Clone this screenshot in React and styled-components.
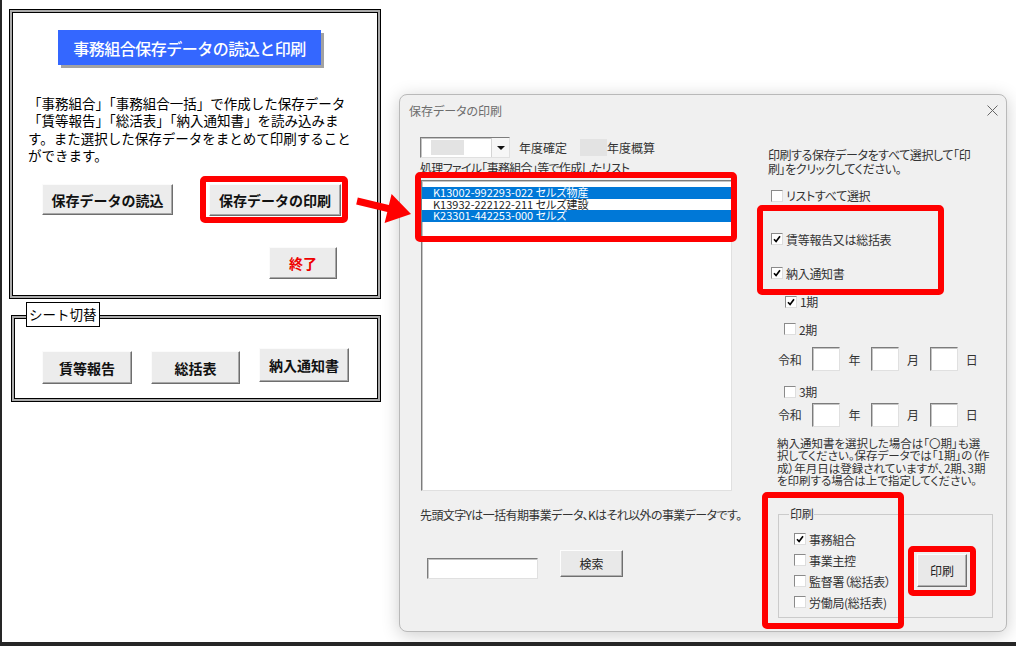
import React from "react";
import styled, { createGlobalStyle, css } from "styled-components";

const GlobalStyle = createGlobalStyle`
  html, body {
    margin: 0;
    padding: 0;
    background: #fff;
  }
  body {
    font-family: "Noto Sans CJK JP", "Noto Sans", sans-serif;
    overflow: hidden;
  }
`;

// ---- page ----

const Screen = styled.div`
  position: relative;
  box-sizing: border-box;
  width: 1016px;
  height: 646px;
  display: flex;
  align-items: flex-start;
  padding: 9px 0 0 7px;
  border-left: 2px solid #262626;
  border-bottom: 4px solid #262626;
  background: #fff;
  overflow: hidden;
`;

const LeftColumn = styled.div`
  display: flex;
  flex-direction: column;
  flex-shrink: 0;
  width: 372px;
`;

const frame = css`
  box-sizing: border-box;
  border: 1px solid #000;
  box-shadow: inset 0 0 0 2px #ababab, inset 0 0 0 3px #000;
  background: #fff;
`;

const MainPanel = styled.div`
  ${frame};
  width: 372px;
  height: 290px;
  display: flex;
  flex-direction: column;
  align-items: flex-start;
`;

const TitleBadge = styled.div`
  margin: 20px 0 0 48px;
  width: 263px;
  height: 35px;
  background: #3467ff;
  color: #fff;
  font-size: 16px;
  font-weight: 500;
  letter-spacing: -0.5px;
  display: flex;
  align-items: center;
  justify-content: center;
  box-shadow: 3px 3px 0 #a2a2a2;
`;

const Desc = styled.p`
  margin: 30px 0 0 18px;
  font-size: 13.5px;
  line-height: 17.3px;
  color: #000;
`;

const ButtonRow = styled.div`
  display: flex;
  align-items: center;
  gap: 27px;
  margin: 12px 0 0 32px;
`;

const SheetButton = styled.button`
  box-sizing: border-box;
  width: ${(p) => p.$w}px;
  height: ${(p) => p.$h}px;
  margin-top: ${(p) => (p.$raise ? -3 : 0)}px;
  padding: 0;
  font-family: inherit;
  font-size: 14px;
  font-weight: 700;
  color: ${(p) => p.$color || "#111"};
  background: #ececec;
  border: 1px solid;
  border-color: #fbfbfb #6e6e6e #6e6e6e #fbfbfb;
  box-shadow: inset -1px -1px 0 #a8a8a8;
`;

const Highlight = styled.div`
  display: flex;
  border: 6px solid #ff0000;
  border-radius: 5px;
  padding: ${(p) => p.$pad};
`;

const QuitRow = styled.div`
  margin: 24px 0 0 259px;
`;

const SheetPanel = styled.div`
  ${frame};
  position: relative;
  width: 370px;
  height: 87px;
  margin: 16px 0 0 2px;
`;

const SheetLabel = styled.div`
  position: absolute;
  top: -14px;
  left: 14px;
  box-sizing: border-box;
  height: 25px;
  padding: 0 2px;
  border: 1px solid #000;
  background: #fff;
  font-size: 13.5px;
  line-height: 23px;
  color: #000;
`;

const SheetButtons = styled.div`
  display: flex;
  align-items: flex-start;
  gap: 19px;
  margin: 35px 0 0 30px;
`;

// ---- dialog ----

const Dialog = styled.div`
  position: relative;
  box-sizing: border-box;
  flex-shrink: 0;
  width: 608px;
  height: 538px;
  margin: 85px 0 0 18px;
  display: flex;
  flex-direction: column;
  background: #f0f0f0;
  border: 1px solid #b9b9b9;
  border-radius: 8px;
  box-shadow: 0 3px 18px rgba(0, 0, 0, 0.2);
  font-size: 12px;
  font-feature-settings: "palt";
  color: #333;
  letter-spacing: -0.3px;
`;

const TitleBar = styled.div`
  height: 30px;
  display: flex;
  align-items: center;
  justify-content: space-between;
  padding: 0 8px 0 9px;
  color: #6d6d6d;
  letter-spacing: 0;
`;

const Body = styled.div`
  display: flex;
  flex: 1;
`;

const LeftPane = styled.div`
  box-sizing: border-box;
  flex-shrink: 0;
  width: 368px;
  padding-left: 20px;
  display: flex;
  flex-direction: column;
  align-items: flex-start;
`;

const YearRow = styled.div`
  display: flex;
  align-items: center;
  height: 21px;
  margin-top: 12px;
`;

const sunken = css`
  box-sizing: border-box;
  background: #fff;
  border: 1px solid;
  border-color: #7c7c7c #e0e0e0 #e0e0e0 #7c7c7c;
  box-shadow: inset 1px 1px 0 #c4c4c4;
`;

const Combo = styled.div`
  ${sunken};
  width: 90px;
  height: 21px;
  display: flex;
`;

const Redact = styled.span`
  width: ${(p) => p.$w}px;
  height: ${(p) => p.$h}px;
  margin-left: ${(p) => p.$ml}px;
  align-self: center;
  background: #e3e3e3;
`;

const ComboArrow = styled.span`
  margin-left: auto;
  width: 17px;
  display: flex;
  align-items: center;
  justify-content: center;
  border-left: 1px solid #d4d4d4;
  background: #f6f6f6;
  &::after {
    content: "";
    border-left: 4px solid transparent;
    border-right: 4px solid transparent;
    border-top: 4px solid #111;
  }
`;

const YearText = styled.span`
  margin-left: ${(p) => p.$ml || 0}px;
  letter-spacing: 0;
`;

const ListLabel = styled.div`
  margin-top: 3px;
  line-height: 14px;
  letter-spacing: -0.7px;
  white-space: nowrap;
`;

const ListBox = styled.div`
  ${sunken};
  width: 311px;
  height: 311px;
  margin: 5px 0 0 1px;
  padding-top: 6px;
`;

const ListItem = styled.div`
  height: 11.5px;
  line-height: 11.5px;
  font-size: 11px;
  letter-spacing: 0;
  padding-left: 11px;
  white-space: nowrap;
  background: ${(p) => (p.$selected ? "#0078d7" : "#fff")};
  color: ${(p) => (p.$selected ? "#fff" : "#222")};
`;

const BottomNote = styled.div`
  margin-top: 17px;
  line-height: 14px;
  letter-spacing: -0.6px;
  white-space: nowrap;
`;

const SearchRow = styled.div`
  display: flex;
  align-items: flex-start;
  margin-top: 28px;
`;

const SearchInput = styled.div`
  ${sunken};
  width: 111px;
  height: 21px;
  margin: 8px 0 0 7px;
`;

const DialogButton = styled.button`
  box-sizing: border-box;
  width: ${(p) => p.$w}px;
  height: ${(p) => p.$h}px;
  margin-left: ${(p) => p.$ml || 0}px;
  padding: 0;
  font-family: inherit;
  font-size: 12px;
  letter-spacing: 0;
  color: #222;
  background: #e9e9e9;
  border: 1px solid;
  border-color: #fdfdfd #6f6f6f #6f6f6f #fdfdfd;
  box-shadow: inset -1px -1px 0 #b0b0b0;
`;

const RightPane = styled.div`
  flex: 1;
  min-width: 0;
  display: flex;
  flex-direction: column;
  align-items: flex-start;
`;

const Instruction = styled.div`
  margin-top: 23px;
  line-height: 14px;
  letter-spacing: -0.4px;
  white-space: nowrap;
`;

const CheckRow = styled.label`
  display: flex;
  align-items: center;
  gap: 3px;
  height: 14px;
  margin-top: ${(p) => p.$top || 0}px;
  margin-left: ${(p) => p.$indent || 0}px;
  white-space: nowrap;
`;

const Box = styled.span`
  box-sizing: border-box;
  width: 12px;
  height: 12px;
  display: inline-flex;
  align-items: center;
  justify-content: center;
  background: #fff;
  border: 1px solid;
  border-color: #8a8a8a #dedede #dedede #8a8a8a;
`;

const DateRow = styled.div`
  display: flex;
  align-items: center;
  height: 24px;
  margin: ${(p) => p.$top}px 0 0 10px;
`;

const DateBox = styled.span`
  ${sunken};
  width: 28px;
  height: 24px;
  margin: 0 8px 0 11px;
`;

const PeriodNote = styled.div`
  margin: 10px 0 0 9px;
  font-size: 11.5px;
  line-height: 12.3px;
  letter-spacing: 0;
  white-space: nowrap;
`;

const Group = styled.fieldset`
  box-sizing: border-box;
  width: 215px;
  height: 111px;
  margin: 21px 0 0 10px;
  padding: 0;
  min-inline-size: 0;
  border: 1px solid #cbcbcb;
`;

const Legend = styled.legend`
  margin-left: 10px;
  padding: 0 1px;
  line-height: 14px;
`;

const GroupInner = styled.div`
  display: flex;
  align-items: center;
  margin-top: 11px;
  padding-left: 15px;
`;

const GroupChecks = styled.div`
  display: flex;
  flex-direction: column;
  gap: 7px;
  width: 114px;
`;

const RedBox = styled.div`
  position: absolute;
  box-sizing: border-box;
  left: ${(p) => p.$x}px;
  top: ${(p) => p.$y}px;
  width: ${(p) => p.$w}px;
  height: ${(p) => p.$h}px;
  border: 6px solid #ff0000;
  border-radius: 5px;
  pointer-events: none;
`;

const ArrowSvg = styled.svg`
  position: absolute;
  left: 348px;
  top: 185px;
  z-index: 5;
`;

const Check = ({ on, children, top, indent }) => (
  <CheckRow $top={top} $indent={indent}>
    <Box>
      {on && (
        <svg width="8" height="8" viewBox="0 0 8 8">
          <path d="M1 4.2 L3.1 6.5 L7 1.3" fill="none" stroke="#000" strokeWidth="1.7" />
        </svg>
      )}
    </Box>
    <span>{children}</span>
  </CheckRow>
);

const DateLine = ({ top }) => (
  <DateRow $top={top}>
    <span>令和</span>
    <DateBox />
    <span>年</span>
    <DateBox />
    <span>月</span>
    <DateBox />
    <span>日</span>
  </DateRow>
);

const App = () => {
  const files = [
    { code: "K13002-992293-022 セルズ物産", selected: true },
    { code: "K13932-222122-211 セルズ建設", selected: false },
    { code: "K23301-442253-000 セルズ", selected: true },
  ];

  return (
    <Screen>
      <GlobalStyle />
      <LeftColumn>
        <MainPanel>
          <TitleBadge>事務組合保存データの読込と印刷</TitleBadge>
          <Desc>
            「事務組合」「事務組合一括」で作成した保存データ
            <br />
            「賃等報告」「総活表」「納入通知書」を読み込みま
            <br />
            す。また選択した保存データをまとめて印刷すること
            <br />
            ができます。
          </Desc>
          <ButtonRow>
            <SheetButton $w={131} $h={31}>保存データの読込</SheetButton>
            <Highlight $pad="2px 1px 1px 3px">
              <SheetButton $w={132} $h={32}>保存データの印刷</SheetButton>
            </Highlight>
          </ButtonRow>
          <QuitRow>
            <SheetButton $w={68} $h={32} $color="#ee0000">終了</SheetButton>
          </QuitRow>
        </MainPanel>

        <SheetPanel>
          <SheetLabel>シート切替</SheetLabel>
          <SheetButtons>
            <SheetButton $w={90} $h={33}>賃等報告</SheetButton>
            <SheetButton $w={89} $h={33}>総括表</SheetButton>
            <SheetButton $w={90} $h={34} $raise>納入通知書</SheetButton>
          </SheetButtons>
        </SheetPanel>
      </LeftColumn>

      <Dialog>
        <TitleBar>
          <span>保存データの印刷</span>
          <svg width="11" height="11" viewBox="0 0 11 11">
            <path d="M0.5 0.5 L10.5 10.5 M10.5 0.5 L0.5 10.5" stroke="#666" strokeWidth="1" />
          </svg>
        </TitleBar>
        <Body>
          <LeftPane>
            <YearRow>
              <Combo>
                <Redact $w={33} $h={15} $ml={10} />
                <ComboArrow />
              </Combo>
              <YearText $ml={9}>年度確定</YearText>
              <Redact $w={27} $h={17} $ml={13} />
              <YearText>年度概算</YearText>
            </YearRow>
            <ListLabel>処理ファイル「事務組合」等で作成したリスト</ListLabel>
            <ListBox>
              {files.map((f) => (
                <ListItem key={f.code} $selected={f.selected}>
                  {f.code}
                </ListItem>
              ))}
            </ListBox>
            <BottomNote>先頭文字Yは一括有期事業データ、Kはそれ以外の事業データです。</BottomNote>
            <SearchRow>
              <SearchInput />
              <DialogButton $w={63} $h={27} $ml={22}>検索</DialogButton>
            </SearchRow>
          </LeftPane>

          <RightPane>
            <Instruction>
              印刷する保存データをすべて選択して「印
              <br />
              刷」をクリックしてください。
            </Instruction>
            <Check top={12.5} indent={3}>リストすべて選択</Check>
            <Check on top={29.5} indent={3}>賃等報告又は総括表</Check>
            <Check on top={20} indent={3}>納入通知書</Check>
            <Check on top={14.5} indent={17}>1期</Check>
            <Check top={13.5} indent={16}>2期</Check>
            <DateLine top={11} />
            <Check top={13.7} indent={16}>3期</Check>
            <DateLine top={4.3} />
            <PeriodNote>
              納入通知書を選択した場合は「〇期」も選
              <br />
              択してください。保存データでは「1期」の（作
              <br />
              成）年月日は登録されていますが、2期、3期
              <br />
              を印刷する場合は上で指定してください。
            </PeriodNote>
            <Group>
              <Legend>印刷</Legend>
              <GroupInner>
                <GroupChecks>
                  <Check on>事務組合</Check>
                  <Check>事業主控</Check>
                  <Check>監督署（総括表）</Check>
                  <Check>労働局(総括表)</Check>
                </GroupChecks>
                <Highlight $pad="2px 3px 3px 3px">
                  <DialogButton $w={50} $h={33}>印刷</DialogButton>
                </Highlight>
              </GroupInner>
            </Group>
          </RightPane>
        </Body>

        <RedBox $x={15} $y={77} $w={322} $h={70} />
        <RedBox $x={357} $y={110} $w={187} $h={90} />
        <RedBox $x={362} $y={397} $w={142} $h={137} />
      </Dialog>

      <ArrowSvg width="66" height="44" viewBox="0 0 66 44">
        <polygon
          points="7.8,12.6 38.9,20.1 41.6,8.9 61,29 34.6,38.1 37.3,26.9 6.2,19.4"
          fill="#ff0000"
        />
      </ArrowSvg>
    </Screen>
  );
};

export default App;
